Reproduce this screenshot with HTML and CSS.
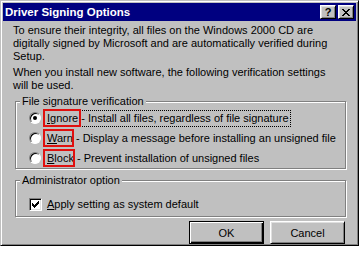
FILE: index.html
```html
<!DOCTYPE html>
<html lang="en">
<head>
    <meta charset="UTF-8">
    <meta name="viewport" content="width=device-width, initial-scale=1.0">
    <title>Driver Signing Options</title>
    <link rel="stylesheet" href="styles.css">
</head>
<body>
    <div class="dialog">
        <div class="titlebar">
            <span class="title">Driver Signing Options</span>
            <div class="title-buttons">
                <button class="caption-btn help-btn">?</button>
                <button class="caption-btn close-btn">
                    <svg width="8" height="7" viewBox="0 0 8 7" shape-rendering="crispEdges">
                        <path d="M0 0h2v1H0zM6 0h2v1H6zM1 1h2v1H1zM5 1h2v1H5zM2 2h4v1H2zM3 3h2v1H3zM2 4h4v1H2zM1 5h2v1H1zM5 5h2v1H5zM0 6h2v1H0zM6 6h2v1H6z" fill="#000"/>
                    </svg>
                </button>
            </div>
        </div>

        <div class="content">
            <p>To ensure their integrity, all files on the Windows 2000 CD are digitally signed by Microsoft and are automatically verified during Setup.</p>
            <p>When you install new software, the following verification settings will be used.</p>

            <fieldset class="group group-signature">
                <legend>File signature verification</legend>
                <div class="option">
                    <span class="radio checked"></span>
                    <span class="focus"><span class="mark"><u>I</u>gnore</span> - Install all files, regardless of file signature</span>
                </div>
                <div class="option">
                    <span class="radio"></span>
                    <span class="label"><span class="mark mark-short"><u>W</u>arn</span> - Display a message before installing an unsigned file</span>
                </div>
                <div class="option">
                    <span class="radio"></span>
                    <span class="label"><span class="mark mark-short"><u>B</u>lock</span> - Prevent installation of unsigned files</span>
                </div>
            </fieldset>

            <fieldset class="group group-admin">
                <legend>Administrator option</legend>
                <div class="option">
                    <span class="checkbox">
                        <svg width="7" height="7" viewBox="0 0 7 7" shape-rendering="crispEdges">
                            <path d="M0 2h1v3H0zM1 3h1v3H1zM2 4h1v3H2zM3 3h1v3H3zM4 2h1v3H4zM5 1h1v3H5zM6 0h1v3H6z" fill="#000"/>
                        </svg>
                    </span>
                    <span class="label"><u>A</u>pply setting as system default</span>
                </div>
            </fieldset>

            <div class="buttons">
                <button class="push default">OK</button>
                <button class="push">Cancel</button>
            </div>
        </div>
    </div>
</body>
</html>
```

FILE: styles.css
```css
body {
    margin: 0;
    background: #fff;
    font-family: "Liberation Sans", Arial, sans-serif;
    font-size: 11px;
    color: #000;
}

.dialog {
    width: 359px;
    height: 246px;
    box-sizing: border-box;
    background: #c0c0c0;
    border: 1px solid;
    border-color: #c0c0c0 #000 #000 #c0c0c0;
    box-shadow: inset 1px 1px #fff, inset -1px -1px #808080;
    padding: 2px;
}

.titlebar {
    height: 18px;
    background: #000080;
    display: flex;
    align-items: center;
    justify-content: space-between;
    padding: 0 2px 0 2px;
}

.title {
    color: #fff;
    font-weight: bold;
    font-size: 11.5px;
}

.title-buttons {
    display: flex;
    gap: 2px;
}

.caption-btn {
    width: 16px;
    height: 14px;
    padding: 0;
    box-sizing: border-box;
    background: #c0c0c0;
    border: 1px solid;
    border-color: #fff #000 #000 #fff;
    box-shadow: inset 1px 1px #dfdfdf, inset -1px -1px #808080;
    display: flex;
    align-items: center;
    justify-content: center;
    font-family: "Liberation Sans", Arial, sans-serif;
    font-weight: bold;
    font-size: 11px;
    line-height: 1;
    color: #000;
}

.content {
    padding: 3px 0 0 10px;
}

.content p {
    margin: 0 0 3px;
    line-height: 13px;
    width: 330px;
}

.group {
    width: 331px;
    box-sizing: border-box;
    margin: 3px 0 0 2px;
    padding: 0;
    border: 1px solid #808080;
    box-shadow: inset 1px 1px #fff, 1px 1px #fff;
}

.group legend {
    margin-left: 4px;
    padding: 0 2px;
    line-height: 13px;
    background: #c0c0c0;
}

.group-admin {
    margin-top: 5px;
    padding: 7px 0 2px;
}

.option {
    height: 20px;
    display: flex;
    align-items: center;
    padding-left: 13px;
}

.radio {
    width: 12px;
    height: 12px;
    box-sizing: border-box;
    border-radius: 50%;
    background: #fff;
    border: 1px solid;
    border-color: #808080 #fff #fff #808080;
    box-shadow: inset 1px 1px #000;
    position: relative;
    flex: none;
}

.radio.checked::after {
    content: "";
    position: absolute;
    left: 3px;
    top: 3px;
    width: 4px;
    height: 4px;
    border-radius: 50%;
    background: #000;
}

.checkbox {
    width: 13px;
    height: 13px;
    box-sizing: border-box;
    background: #fff;
    border: 1px solid;
    border-color: #808080 #fff #fff #808080;
    box-shadow: inset 1px 1px #000, inset -1px -1px #dfdfdf;
    display: flex;
    align-items: center;
    justify-content: center;
    flex: none;
}

.focus,
.label {
    margin-left: 2px;
    padding: 1px 1px 1px 3px;
    line-height: 13px;
    border: 1px dotted transparent;
}

.focus {
    border-color: #000;
}

.mark {
    position: relative;
}

.mark::after {
    content: "";
    position: absolute;
    left: -4px;
    right: -3px;
    top: -3px;
    bottom: -3px;
    border: 2px solid #e0100e;
}

.mark-short::after {
    right: -1px;
}

.group-admin .label {
    margin-left: 1px;
}

.buttons {
    display: flex;
    justify-content: flex-end;
    gap: 6px;
    width: 332px;
    margin-top: 4px;
}

.push {
    width: 75px;
    height: 23px;
    box-sizing: border-box;
    background: #c0c0c0;
    border: 1px solid;
    border-color: #fff #000 #000 #fff;
    box-shadow: inset 1px 1px #dfdfdf, inset -1px -1px #808080;
    font-family: "Liberation Sans", Arial, sans-serif;
    font-size: 11px;
    color: #000;
    padding: 0;
}

.push.default {
    border-color: #000;
    box-shadow: inset 1px 1px #fff, inset -1px -1px #000, inset -2px -2px #808080;
}
```
